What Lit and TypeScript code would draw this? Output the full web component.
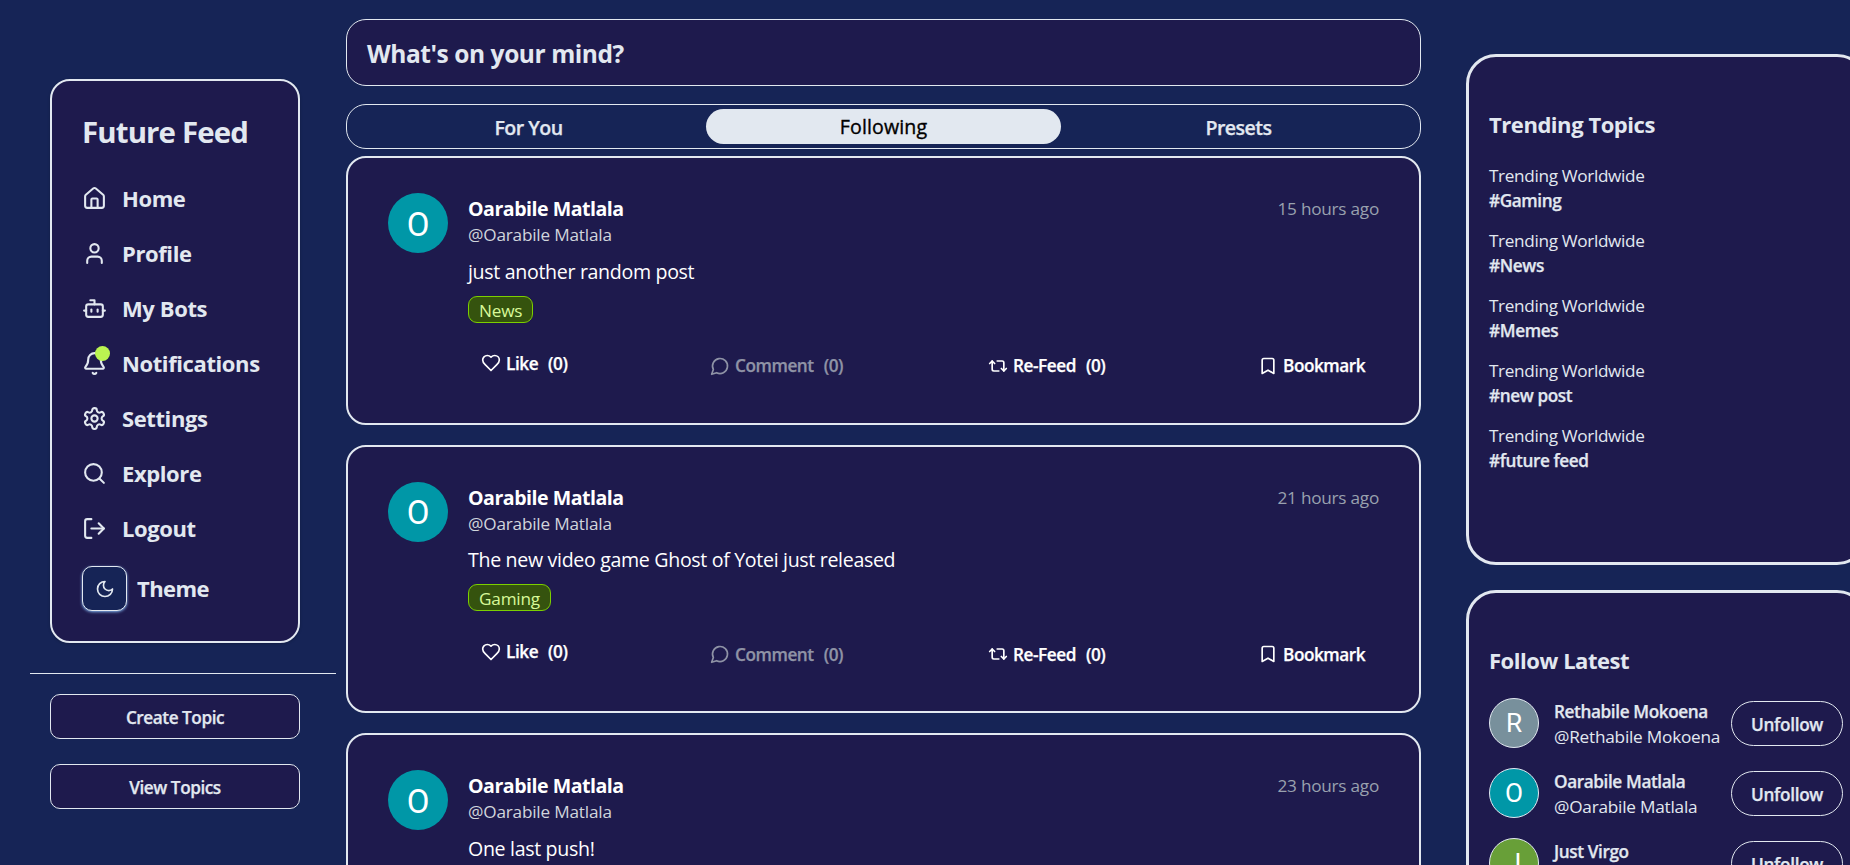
import { LitElement, html, css, svg, nothing } from "lit";
import { customElement, property } from "lit/decorators.js";

const ICONS: Record<string, unknown> = {
  home: svg`<path d="M15 21v-8a1 1 0 0 0-1-1h-4a1 1 0 0 0-1 1v8"/><path d="M3 10a2 2 0 0 1 .709-1.528l7-5.999a2 2 0 0 1 2.582 0l7 5.999A2 2 0 0 1 21 10v9a2 2 0 0 1-2 2H5a2 2 0 0 1-2-2z"/>`,
  user: svg`<path d="M19 21v-2a4 4 0 0 0-4-4H9a4 4 0 0 0-4 4v2"/><circle cx="12" cy="7" r="4"/>`,
  bot: svg`<path d="M12 8V4H8"/><rect width="16" height="12" x="4" y="8" rx="2"/><path d="M2 14h2"/><path d="M20 14h2"/><path d="M15 13v2"/><path d="M9 13v2"/>`,
  bell: svg`<path d="M10.268 21a2 2 0 0 0 3.464 0"/><path d="M3.262 15.326A1 1 0 0 0 4 17h16a1 1 0 0 0 .74-1.673C19.41 13.956 18 12.499 18 8A6 6 0 0 0 6 8c0 4.499-1.411 5.956-2.738 7.326"/>`,
  settings: svg`<path d="M12.22 2h-.44a2 2 0 0 0-2 2v.18a2 2 0 0 1-1 1.73l-.43.25a2 2 0 0 1-2 0l-.15-.08a2 2 0 0 0-2.73.73l-.22.38a2 2 0 0 0 .73 2.73l.15.1a2 2 0 0 1 1 1.72v.51a2 2 0 0 1-1 1.74l-.15.09a2 2 0 0 0-.73 2.73l.22.38a2 2 0 0 0 2.73.73l.15-.08a2 2 0 0 1 2 0l.43.25a2 2 0 0 1 1 1.73V20a2 2 0 0 0 2 2h.44a2 2 0 0 0 2-2v-.18a2 2 0 0 1 1-1.73l.43-.25a2 2 0 0 1 2 0l.15.08a2 2 0 0 0 2.73-.73l.22-.39a2 2 0 0 0-.73-2.73l-.15-.08a2 2 0 0 1-1-1.74v-.5a2 2 0 0 1 1-1.74l.15-.09a2 2 0 0 0 .73-2.73l-.22-.38a2 2 0 0 0-2.73-.73l-.15.08a2 2 0 0 1-2 0l-.43-.25a2 2 0 0 1-1-1.73V4a2 2 0 0 0-2-2z"/><circle cx="12" cy="12" r="3"/>`,
  search: svg`<circle cx="11" cy="11" r="8"/><path d="m21 21-4.3-4.3"/>`,
  logout: svg`<path d="M9 21H5a2 2 0 0 1-2-2V5a2 2 0 0 1 2-2h4"/><path d="m16 17 5-5-5-5"/><path d="M21 12H9"/>`,
  moon: svg`<path d="M12 3a6 6 0 0 0 9 9 9 9 0 1 1-9-9Z"/>`,
  heart: svg`<path d="M19 14c1.49-1.46 3-3.21 3-5.5A5.5 5.5 0 0 0 16.5 3c-1.76 0-3 .5-4.5 2-1.5-1.5-2.74-2-4.5-2A5.5 5.5 0 0 0 2 8.5c0 2.3 1.5 4.05 3 5.5l7 7Z"/>`,
  comment: svg`<path d="M7.9 20A9 9 0 1 0 4 16.1L2 22Z"/>`,
  repeat: svg`<path d="m2 9 3-3 3 3"/><path d="M13 18H7a2 2 0 0 1-2-2V6"/><path d="m22 15-3 3-3-3"/><path d="M11 6h6a2 2 0 0 1 2 2v10"/>`,
  bookmark: svg`<path d="m19 21-7-4-7 4V5a2 2 0 0 1 2-2h10a2 2 0 0 1 2 2v16z"/>`,
};

const icon = (name: string) => html`<svg
  class="icon"
  viewBox="0 0 24 24"
  fill="none"
  stroke="currentColor"
  stroke-width="2"
  stroke-linecap="round"
  stroke-linejoin="round"
>${ICONS[name]}</svg>`;

const shared = css`
  * { box-sizing: border-box; }
  .icon { display: block; width: 20px; height: 20px; flex: none; }
  button {
    font: inherit;
    letter-spacing: inherit;
    color: inherit;
    background: none;
    border: 0;
    padding: 0;
    white-space: nowrap;
  }
`;

@customElement("side-nav")
class SideNav extends LitElement {
  static styles = [shared, css`
    :host { display: block; width: 306px; padding-top: 79px; }
    .card {
      width: 250px;
      height: 564px;
      margin: 0 20px;
      padding: 33px 30px 0;
      border: 2px solid #e2e8f0;
      border-radius: 20px;
      background: #1e1a4d;
      box-shadow: 0 1px 3px rgba(0, 0, 0, 0.2);
    }
    h1 {
      margin: 0 0 20px;
      font-size: 29.4px;
      line-height: 36px;
      letter-spacing: -0.85px;
      white-space: nowrap;
    }
    .item {
      display: flex;
      align-items: center;
      gap: 15px;
      height: 55px;
      font-size: 22px;
      font-weight: 700;
      letter-spacing: -0.4px;
    }
    .item .icon { width: 25px; height: 25px; }
    .glyph { position: relative; padding-top: 1px; }
    .dot {
      position: absolute;
      top: -4px;
      right: -3px;
      width: 15px;
      height: 15px;
      border-radius: 50%;
      background: #bbf451;
    }
    .theme {
      display: flex;
      align-items: center;
      gap: 10px;
      margin-top: 11px;
      font-size: 22px;
      font-weight: 700;
      letter-spacing: -0.55px;
    }
    .theme span { padding-bottom: 2px; }
    .toggle {
      display: grid;
      place-items: center;
      width: 45px;
      height: 45px;
      border: 1px solid #e2e8f0;
      border-radius: 10px;
      background: #162456;
      box-shadow: 0 1px 3px rgba(142, 197, 255, 0.9);
    }
    hr { height: 1px; margin: 30px 0 20px; border: 0; background: #e2e8f0; }
    .topic {
      display: block;
      width: 250px;
      height: 45px;
      margin: 0 20px 25px;
      padding-top: 1px;
      border: 1px solid #e2e8f0;
      border-radius: 10px;
      background: #1e1a4d;
      font-size: 17.2px;
      font-weight: 600;
      letter-spacing: -0.45px;
      -webkit-text-stroke: 0.25px currentColor;
    }
  `];

  private items = [
    ["home", "Home"],
    ["user", "Profile"],
    ["bot", "My Bots"],
    ["bell", "Notifications"],
    ["settings", "Settings"],
    ["search", "Explore"],
    ["logout", "Logout"],
  ];

  render() {
    return html`
      <nav class="card">
        <h1>Future Feed</h1>
        ${this.items.map(([name, label]) => html`
          <div class="item">
            <span class="glyph">${icon(name)}${name === "bell" ? html`<span class="dot"></span>` : nothing}</span>
            <span>${label}</span>
          </div>`)}
        <div class="theme"><button class="toggle">${icon("moon")}</button><span>Theme</span></div>
      </nav>
      <hr />
      <button class="topic">Create Topic</button>
      <button class="topic">View Topics</button>
    `;
  }
}

@customElement("feed-post")
class FeedPost extends LitElement {
  static styles = [shared, css`
    :host {
      display: flex;
      gap: 20px;
      box-sizing: border-box;
      height: 268.6px;
      padding: 35px 40px 0;
      border: 2px solid #e2e8f0;
      border-radius: 20px;
      background: #1e1a4d;
      color: #fff;
    }
    .avatar {
      display: grid;
      place-items: center;
      flex: none;
      width: 60px;
      height: 60px;
      padding-top: 2px;
      border-radius: 50%;
      background: #0097a7;
      font: 33px/1 Roboto, sans-serif;
    }
    .body { flex: 1; min-width: 0; }
    .head { display: flex; justify-content: space-between; padding-top: 1px; line-height: 30px; }
    .name { font-size: 19.6px; font-weight: 700; letter-spacing: -0.5px; }
    .time { font-size: 17.2px; letter-spacing: -0.25px; color: #99a1af; }
    .handle { font-size: 17.2px; line-height: 21px; letter-spacing: -0.2px; color: #d1d5dc; }
    .text { margin-top: 10.5px; font-size: 19.6px; line-height: 31px; letter-spacing: -0.33px; }
    .tag {
      display: block;
      width: max-content;
      height: 27px;
      margin-top: 9px;
      padding: 0 10px;
      border: 1px solid #7ccf00;
      border-radius: 9px;
      background: #35530e;
      color: #d8f999;
      font-size: 17.2px;
      line-height: 27px;
      letter-spacing: -0.2px;
    }
    .actions {
      display: grid;
      grid-template-columns: 229px 278px 270px auto;
      align-items: center;
      height: 30px;
      margin-top: 28px;
      padding-left: 13px;
      font-size: 17.2px;
      font-weight: 600;
      letter-spacing: -0.45px;
      -webkit-text-stroke: 0.25px currentColor;
    }
    .action { display: flex; align-items: center; gap: 5px; }
    .like { margin-bottom: 5px; }
    .muted { color: #8f93a6; }
    .count { margin-left: 5px; }
  `];

  @property() text = "";
  @property() tag = "";
  @property() time = "";

  render() {
    return html`
      <div class="avatar">O</div>
      <div class="body">
        <div class="head"><span class="name">Oarabile Matlala</span><span class="time">${this.time}</span></div>
        <div class="handle">@Oarabile Matlala</div>
        <div class="text">${this.text}</div>
        ${this.tag ? html`<span class="tag">${this.tag}</span>
        <div class="actions">
          <button class="action like">${icon("heart")}<span>Like</span><span class="count">(0)</span></button>
          <button class="action muted">${icon("comment")}<span>Comment</span><span class="count">(0)</span></button>
          <button class="action">${icon("repeat")}<span>Re-Feed</span><span class="count">(0)</span></button>
          <button class="action">${icon("bookmark")}<span>Bookmark</span></button>
        </div>` : nothing}
      </div>
    `;
  }
}

@customElement("right-rail")
class RightRail extends LitElement {
  static styles = [shared, css`
    :host { display: block; width: 401px; padding-top: 54px; }
    .card {
      height: 511px;
      margin-bottom: 25px;
      padding: 53px 20px 0;
      border: 3px solid #e2e8f0;
      border-radius: 30px;
      background: #1e1a4d;
    }
    h2 {
      margin: 0 0 15px;
      font-size: 22px;
      line-height: 28px;
      letter-spacing: -0.45px;
    }
    .trend { padding: 10px 0 5px; font-size: 17.2px; line-height: 25px; }
    .scope { letter-spacing: -0.35px; }
    .handle { letter-spacing: -0.22px; }
    .tag, .name {
      font-weight: 600;
      letter-spacing: -0.4px;
      -webkit-text-stroke: 0.25px currentColor;
    }
    .person { display: flex; align-items: center; height: 50px; margin-bottom: 20px; }
    .avatar {
      display: grid;
      place-items: center;
      flex: none;
      width: 50px;
      height: 50px;
      margin-right: 15px;
      border: 1px solid #e2e8f0;
      border-radius: 50%;
      color: #fff;
      font: 26.2px/1 Roboto, sans-serif;
    }
    .gray { background: #78909c; }
    .teal { background: #0097a7; }
    .green { background: #689f38; }
    .who { width: 177px; padding-top: 2px; font-size: 17.2px; line-height: 25px; white-space: nowrap; }
    .unfollow {
      width: 112px;
      height: 45px;
      margin-top: 1px;
      padding-top: 1px;
      border: 1px solid #e2e8f0;
      border-radius: 22.5px;
      font-size: 17.2px;
      font-weight: 600;
      letter-spacing: -0.3px;
      -webkit-text-stroke: 0.25px currentColor;
    }
    .people { padding-top: 9px; }
  `];

  private topics = ["#Gaming", "#News", "#Memes", "#new post", "#future feed"];
  private people = [
    ["Rethabile Mokoena", "gray"],
    ["Oarabile Matlala", "teal"],
    ["Just Virgo", "green"],
  ];

  render() {
    return html`
      <section class="card">
        <h2>Trending Topics</h2>
        ${this.topics.map((t) => html`
          <div class="trend"><div class="scope">Trending Worldwide</div><div class="tag">${t}</div></div>`)}
      </section>
      <section class="card">
        <h2>Follow Latest</h2>
        <div class="people">
          ${this.people.map(([name, tone]) => html`
            <div class="person">
              <div class="avatar ${tone}">${name[0]}</div>
              <div class="who"><div class="name">${name}</div><div class="handle">@${name}</div></div>
              <button class="unfollow">Unfollow</button>
            </div>`)}
        </div>
      </section>
    `;
  }
}

@customElement("app-root")
class AppRoot extends LitElement {
  static styles = [shared, css`
    :host {
      display: flex;
      box-sizing: border-box;
      width: 100%;
      height: 865px;
      padding-left: 30px;
      overflow: hidden;
      background: #162456;
      color: #e2e8f0;
      font-family: "Open Sans", "Noto Sans", sans-serif;
    }
    side-nav, right-rail { flex: none; }
    main {
      flex: none;
      width: 1075px;
      margin: 19px 45px 0 10px;
    }
    .compose {
      display: flex;
      align-items: center;
      height: 67px;
      padding: 1px 20px 0;
      border: 1px solid #e2e8f0;
      border-radius: 20px;
      background: #1e1a4d;
      font-size: 24.5px;
      font-weight: 700;
      letter-spacing: -0.43px;
    }
    .tabs {
      display: grid;
      grid-template-columns: repeat(3, 1fr);
      height: 45px;
      margin: 18px 0 7px;
      padding: 4px;
      border: 1px solid #e2e8f0;
      border-radius: 20px;
      font-size: 19.6px;
      font-weight: 600;
      letter-spacing: -0.55px;
      -webkit-text-stroke: 0.25px currentColor;
    }
    .tab { height: 35px; padding-top: 2px; border-radius: 17.5px; }
    .active {
      padding-top: 0;
      background: #e2e8f0;
      color: #000;
      font-weight: 500;
      letter-spacing: 0.1px;
      -webkit-text-stroke: 0.35px currentColor;
    }
    .posts { display: flex; flex-direction: column; gap: 20px; }
  `];

  render() {
    return html`
      <side-nav></side-nav>
      <main>
        <div class="compose">What's on your mind?</div>
        <div class="tabs">
          <button class="tab">For You</button>
          <button class="tab active">Following</button>
          <button class="tab">Presets</button>
        </div>
        <div class="posts">
          <feed-post time="15 hours ago" text="just another random post" tag="News"></feed-post>
          <feed-post time="21 hours ago" text="The new video game Ghost of Yotei just released" tag="Gaming"></feed-post>
          <feed-post time="23 hours ago" text="One last push!"></feed-post>
        </div>
      </main>
      <right-rail></right-rail>
    `;
  }
}
